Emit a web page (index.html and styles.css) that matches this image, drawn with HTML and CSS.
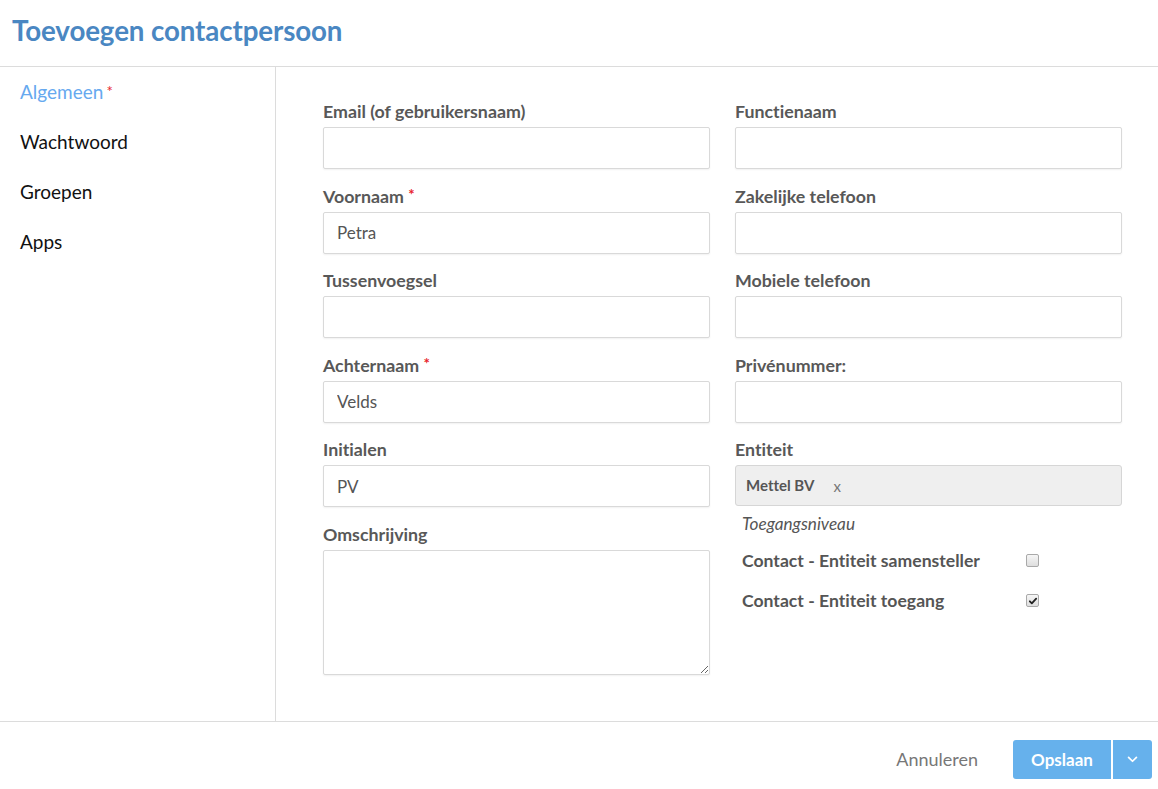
FILE: index.html
```html
<!DOCTYPE html>
<html lang="nl">
<head>
<meta charset="utf-8">
<title>Toevoegen contactpersoon</title>
<link rel="stylesheet" href="styles.css">
</head>
<body>
<div class="dialog">
  <header class="header">
    <h1 class="title">Toevoegen contactpersoon</h1>
  </header>
  <div class="main">
    <nav class="sidebar">
      <a class="nav-item active">Algemeen <span class="req">*</span></a>
      <a class="nav-item">Wachtwoord</a>
      <a class="nav-item">Groepen</a>
      <a class="nav-item">Apps</a>
    </nav>
    <div class="content">
      <div class="col">
        <div class="field">
          <label class="label">Email (of gebruikersnaam)</label>
          <input class="input" type="text" value="">
        </div>
        <div class="field">
          <label class="label">Voornaam <span class="req">*</span></label>
          <input class="input" type="text" value="Petra">
        </div>
        <div class="field">
          <label class="label">Tussenvoegsel</label>
          <input class="input" type="text" value="">
        </div>
        <div class="field">
          <label class="label">Achternaam <span class="req">*</span></label>
          <input class="input" type="text" value="Velds">
        </div>
        <div class="field">
          <label class="label">Initialen</label>
          <input class="input" type="text" value="PV">
        </div>
        <div class="field">
          <label class="label">Omschrijving</label>
          <textarea class="textarea"></textarea>
        </div>
      </div>
      <div class="col">
        <div class="field">
          <label class="label">Functienaam</label>
          <input class="input" type="text" value="">
        </div>
        <div class="field">
          <label class="label">Zakelijke telefoon</label>
          <input class="input" type="text" value="">
        </div>
        <div class="field">
          <label class="label">Mobiele telefoon</label>
          <input class="input" type="text" value="">
        </div>
        <div class="field">
          <label class="label">Privénummer:</label>
          <input class="input" type="text" value="">
        </div>
        <div class="field">
          <label class="label">Entiteit</label>
          <div class="select">
            <span class="tag">Mettel BV</span><span class="tag-x">x</span>
          </div>
        </div>
        <div class="access">
          <div class="access-title">Toegangsniveau</div>
          <div class="check-row">
            <span class="check-label">Contact - Entiteit samensteller</span>
            <span class="checkbox"></span>
          </div>
          <div class="check-row">
            <span class="check-label">Contact - Entiteit toegang</span>
            <span class="checkbox checked">
              <svg viewBox="0 0 12 12" width="10" height="10"><path d="M2.2 6.4 L4.6 8.8 L9.8 3.2" fill="none" stroke="#222" stroke-width="2.2" stroke-linecap="round" stroke-linejoin="round"/></svg>
            </span>
          </div>
        </div>
      </div>
    </div>
  </div>
  <footer class="footer">
    <button class="btn-cancel">Annuleren</button>
    <div class="btn-group">
      <button class="btn-primary">Opslaan</button>
      <button class="btn-caret">
        <svg viewBox="0 0 12 8" width="11" height="7"><path d="M1.5 1.5 L6 6 L10.5 1.5" fill="none" stroke="#fff" stroke-width="2" stroke-linecap="round" stroke-linejoin="round"/></svg>
      </button>
    </div>
  </footer>
</div>
</body>
</html>
```

FILE: styles.css
```css
* { box-sizing: border-box; }

html, body {
  margin: 0;
  padding: 0;
  background: #fff;
}

body {
  font-family: Lato, "Open Sans", "Liberation Sans", sans-serif;
  font-variant-ligatures: none;
  font-feature-settings: "liga" 0, "dlig" 0;
  color: #555;
  width: 1158px;
  height: 789px;
  overflow: hidden;
}

input, textarea, button {
  font-variant-ligatures: none;
  font-feature-settings: "liga" 0, "dlig" 0;
}

.dialog {
  display: flex;
  flex-direction: column;
  height: 789px;
}

.header {
  height: 67px;
  border-bottom: 1px solid #dcdcdc;
  display: flex;
  align-items: center;
  padding-left: 12px;
  padding-bottom: 6px;
}

.title {
  margin: 0;
  font-size: 27.7px;
  font-weight: 700;
  color: #4a87c2;
  letter-spacing: -0.1px;
}

.main {
  display: flex;
  height: 655px;
  border-bottom: 1px solid #dcdcdc;
}

.sidebar {
  width: 276px;
  border-right: 1px solid #dcdcdc;
  display: flex;
  flex-direction: column;
}

.nav-item {
  height: 50px;
  display: flex;
  align-items: center;
  padding-left: 20px;
  font-size: 19px;
  color: #111;
  padding-bottom: 1px;
}

.nav-item.active {
  color: #66a9ef;
}

.nav-item .req {
  margin-left: 3px;
  font-size: 15px;
  align-self: flex-start;
  margin-top: 15px;
}

.req {
  color: #e8242b;
}

.content {
  flex: 1;
  display: grid;
  grid-template-columns: 387px 387px;
  column-gap: 25px;
  padding: 34px 0 0 47px;
  align-items: start;
}

.col {
  display: flex;
  flex-direction: column;
}

.field {
  display: flex;
  flex-direction: column;
  margin-bottom: 16.5px;
}

.label {
  font-size: 17.8px;
  font-weight: 700;
  line-height: 20px;
  height: 20px;
  color: #585858;
  margin-bottom: 6px;
  white-space: nowrap;
}

.label .req {
  font-size: 15px;
  line-height: 0;
  position: relative;
  top: -3px;
}

.input {
  height: 42px;
  border: 1px solid #d9d9d9;
  border-radius: 2px;
  box-shadow: 0 1px 2px rgba(0,0,0,0.06);
  padding: 0 13px;
  font-family: inherit;
  font-size: 17px;
  color: #555;
  outline: none;
}

.textarea {
  height: 125px;
  border: 1px solid #d9d9d9;
  border-radius: 2px;
  box-shadow: 0 1px 2px rgba(0,0,0,0.06);
  font-family: inherit;
  font-size: 17px;
  resize: vertical;
  outline: none;
}

.select {
  height: 41px;
  background: #efefef;
  border: 1px solid #d6d6d6;
  border-radius: 3px;
  display: flex;
  align-items: center;
  padding-left: 10px;
  padding-bottom: 1px;
}

.tag {
  font-size: 15px;
  font-weight: 700;
  color: #555;
}

.tag-x {
  margin-left: 19px;
  font-size: 15px;
  color: #777;
  margin-top: 2px;
}

.access {
  padding-left: 7px;
  margin-top: -9px;
}

.access-title {
  font-size: 17.2px;
  font-style: italic;
  color: #555;
  line-height: 20px;
  margin-bottom: 7px;
}

.check-row {
  display: flex;
  align-items: center;
  height: 40px;
}

.check-label {
  width: 284px;
  font-size: 17.6px;
  font-weight: 700;
  color: #555;
  white-space: nowrap;
}

.checkbox {
  width: 13px;
  height: 13px;
  border: 1px solid #a9a9a9;
  border-radius: 2px;
  background: linear-gradient(#f6f6f6, #dedede);
  display: flex;
  align-items: center;
  justify-content: center;
}

.footer {
  flex: 1;
  display: flex;
  align-items: center;
  justify-content: flex-end;
  padding-right: 6px;
  padding-top: 7px;
}

.btn-cancel {
  border: none;
  background: none;
  font-family: inherit;
  font-size: 18px;
  color: #777;
  margin-right: 35px;
  padding: 0;
}

.btn-group {
  display: flex;
  gap: 2px;
}

.btn-primary {
  width: 98px;
  height: 39px;
  border: none;
  border-radius: 3px 0 0 3px;
  background: #66b1ec;
  color: #fff;
  font-family: inherit;
  font-size: 17px;
  font-weight: 700;
}

.btn-caret {
  width: 39px;
  height: 39px;
  border: none;
  border-radius: 0 3px 3px 0;
  background: #66b1ec;
  display: flex;
  align-items: center;
  justify-content: center;
  padding: 0;
}
```
